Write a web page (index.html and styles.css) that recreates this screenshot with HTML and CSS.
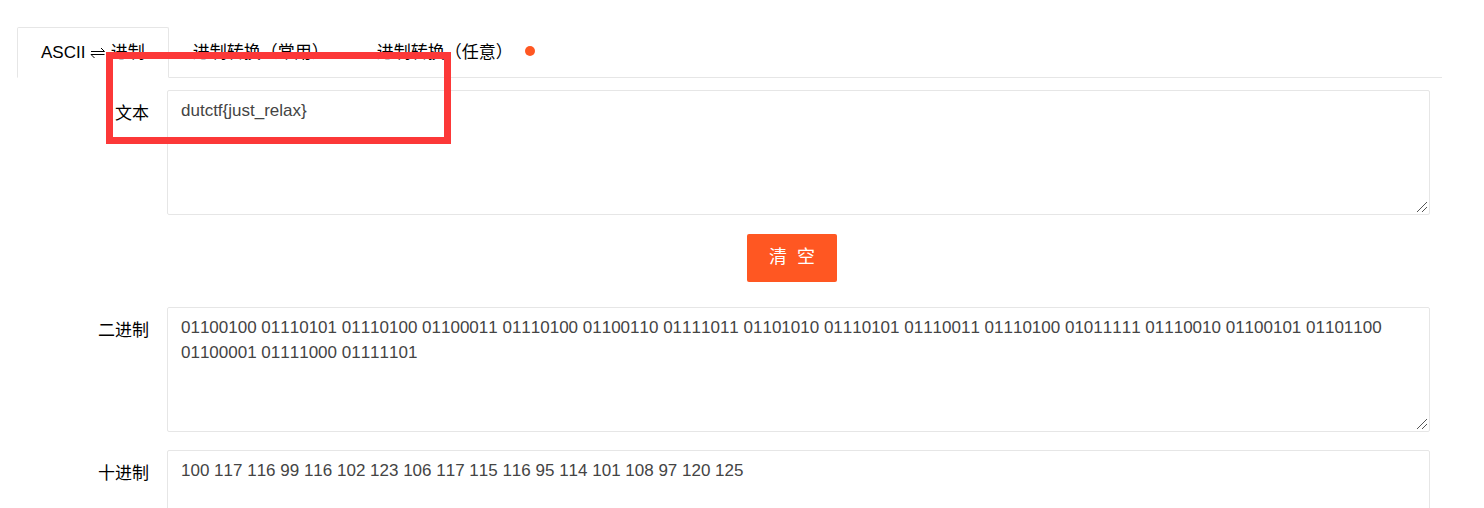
FILE: index.html
```html
<!DOCTYPE html>
<html lang="zh-CN">
<head>
<meta charset="utf-8">
<title>ASCII ⇌ 进制</title>
<link rel="stylesheet" href="styles.css">
</head>
<body>
<main class="converter">
  <div class="tabs" role="tablist">
    <button class="tab" type="button" role="tab" aria-selected="true">ASCII <svg class="swap" viewBox="0 0 16 16" aria-hidden="true"><path d="M1 6.500H14.500L11 3M14.500 9.500H1L4.500 13"/></svg> 进制</button>
    <button class="tab" type="button" role="tab" aria-selected="false">进制转换（常用）</button>
    <button class="tab" type="button" role="tab" aria-selected="false">进制转换（任意）<span class="dot"></span></button>
  </div>
  <form class="form">
    <div class="row">
      <label class="label" for="text">文本</label>
      <textarea class="field" id="text" spellcheck="false">dutctf{just_relax}</textarea>
    </div>
    <div class="actions"><button class="clear" type="reset">清&nbsp;&nbsp;空</button></div>
    <div class="row">
      <label class="label" for="binary">二进制</label>
      <textarea class="field" id="binary" spellcheck="false">01100100 01110101 01110100 01100011 01110100 01100110 01111011 01101010 01110101 01110011 01110100 01011111 01110010 01100101 01101100 01100001 01111000 01111101</textarea>
    </div>
    <div class="row">
      <label class="label" for="decimal">十进制</label>
      <textarea class="field" id="decimal" spellcheck="false">100 117 116 99 116 102 123 106 117 115 116 95 114 101 108 97 120 125</textarea>
    </div>
  </form>
  <div class="highlight"></div>
</main>
</body>
</html>
```
FILE: styles.css
```css
* { box-sizing: border-box; }

body {
  margin: 0;
  height: 100vh;
  overflow: hidden;
  background: #fff;
  color: #000;
  font: 17px/25px "Liberation Sans", "Noto Sans CJK SC", sans-serif;
}

button, textarea { font: inherit; }

.converter {
  position: relative;
  height: 100%;
  overflow: hidden;
  padding: 27px 42px 0 17px;
}

.tabs {
  display: flex;
  height: 51px;
  border-bottom: 1px solid #e6e6e6;
}

.tab {
  display: flex;
  align-items: center;
  height: 51px;
  padding: 0 23px;
  border: 1px solid transparent;
  background: none;
  color: #000;
  white-space: pre;
}

.tab[aria-selected="true"] {
  border-color: #e6e6e6;
  border-bottom-color: #fff;
  border-radius: 2px 2px 0 0;
  background: #fff;
}

.swap {
  width: 16px;
  height: 16px;
  fill: none;
  stroke: #000;
  stroke-width: 1;
}

.dot {
  width: 10px;
  height: 10px;
  margin: 0 0 4px 12px;
  border-radius: 50%;
  background: #ff5722;
}

.form { padding: 12px 12px 0 0; }

.row {
  display: flex;
  margin-bottom: 18px;
}

.label {
  flex: 0 0 150px;
  padding: 11px 18px 0 0;
  text-align: right;
}

.field {
  flex: 1;
  min-width: 0;
  height: 125px;
  padding: 7px 13px;
  border: 1px solid #e6e6e6;
  border-radius: 2px;
  outline: none;
  background: #fff;
  color: #444;
  font-kerning: none;
  resize: vertical;
}

.field::-webkit-resizer {
  background: url("data:image/svg+xml,%3Csvg xmlns='http://www.w3.org/2000/svg' width='15' height='15'%3E%3Cpath d='M3 13L13 3M8 13L13 8' stroke='%23555'/%3E%3C/svg%3E") no-repeat;
}

.actions {
  display: flex;
  justify-content: center;
  padding: 1px 0 25px 137px;
}

.clear {
  height: 48px;
  padding: 0 22px 2px;
  border: 0;
  border-radius: 2px;
  background: #ff5722;
  color: #fff;
  font-size: 18px;
  white-space: nowrap;
}

.highlight {
  position: absolute;
  top: 52px;
  left: 106px;
  width: 345px;
  height: 92px;
  border: 7px solid #fc3838;
  pointer-events: none;
}
```
